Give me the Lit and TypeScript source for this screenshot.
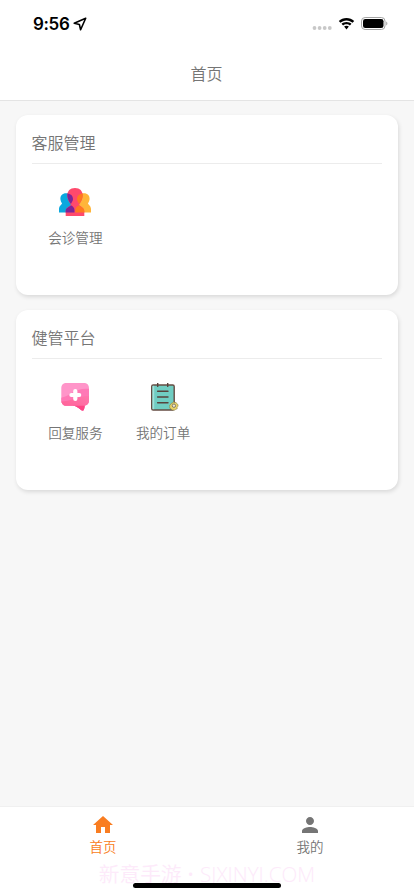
import { LitElement, html, css, svg } from "lit";
import { customElement, property } from "lit/decorators.js";

const peopleIcon = svg`<svg viewBox="0 0 32 32" width="32" height="32">
  <path fill="#ffb53a" d="M24.800 5.300c4 0 6 2.600 5.800 5.800-.1 2-1 3.200-1.600 4.300 0 1.200 3 2 3 5.600v3.400H16.500V8c3-.2 4-2.700 8.300-2.700z"/>
  <path fill="#0ba8de" d="M7.200 5.300c-4 0-6 2.600-5.800 5.800.1 2 1 3.200 1.600 4.300 0 1.200-3 2-3 5.600v3.400h15.500V8c-3-.2-4-2.700-8.300-2.700z"/>
  <path fill="#ff496c" d="M16 0C11 0 8.300 3 8.300 7.600c0 3.700 1.700 6.500 3.500 9 0 1.800-5.100 2.700-5.100 6.800V28h18.600v-4.600c0-4.100-5.100-5-5.100-6.800 1.800-2.500 3.500-5.300 3.500-9C23.700 3 21 0 16 0z"/>
  <path fill="#7f2497" d="M8.400 5.400c3.800.2 6.100 3.200 5.500 6.600-.3 1.700-1.500 2.400-1.900 3.900-2-2.500-4.200-6.300-3.600-10.500zM12 17.200c2.400 1.400 3.500 2.600 3.500 5.300v1.900H6.700v-1.500c0-3.500 4.300-4.100 5.300-5.700z"/>
  <path fill="#ff781f" d="M23.600 5.400c-3.800.2-6.100 3.200-5.500 6.600.3 1.700 1.500 2.400 1.900 3.900 2-2.500 4.200-6.300 3.600-10.500zM20 17.200c-2.600 1.400-3.700 2.600-3.700 5.300v1.900h9v-1.500c0-3.500-4.300-4.100-5.300-5.700z"/>
</svg>`;

const chatIcon = svg`<svg viewBox="0 0 32 32" width="32" height="32">
  <defs>
    <linearGradient id="lo" x1="0" y1="1" x2="1" y2="0"><stop offset="0" stop-color="#ff5b92"/><stop offset="1" stop-color="#ff78ac"/></linearGradient>
    <clipPath id="bubble"><path d="M7.800 0h16.700C28.200 0 30 1.800 30 5.500V17c0 3-1.200 5-4.300 5.600-.2 1.300-.3 2.500-.7 3.700-.4 1.300-1.300 1.500-2.500.9-2.300-1.300-4-3.400-7-4.400H7.800c-3.700 0-5.500-2-5.500-5.800V5.500C2.300 1.800 4.100 0 7.800 0z"/></clipPath>
  </defs>
  <g clip-path="url(#bubble)">
    <path fill="#ff95c9" d="M0 0h32v30H0z"/>
    <path fill="#ff79b6" d="M0 15C10 15 15 4 31 6v24H0z"/>
    <path fill="url(#lo)" d="M0 18.500c10 1 17-5.500 31-5.500v17H0z"/>
    <path fill="#ff4485" d="M14 22.800h12.400V30H14z"/>
  </g>
  <path fill="#fff" d="M14.200 8q0-2 2.100-2t2.100 2v1.900h1.900q2 0 2 2.100t-2 2.100h-1.900V16q0 2-2.100 2t-2.100-2v-1.900h-1.900q-2 0-2-2.100t2-2.100h1.900z"/>
</svg>`;

const orderIcon = svg`<svg viewBox="0 0 32 32" width="32" height="32">
  <rect x="4.700" y="2" width="22.500" height="25" rx="1.500" fill="#70cdc2" stroke="#654c43" stroke-width="1.400"/>
  <path d="M5.500 2.800h1.700v23.400H5.500z" fill="#a2e0d8"/>
  <path d="M10.700 0v3.400M20.700 0v3.400M10.600 8.300H21M10.600 14H21M10.600 19.700H21" fill="none" stroke="#57433c" stroke-width="1.400" stroke-linecap="round"/>
  <path d="m26 18.700 1.500 1 1.800-.1.800 1.600 1.500 1-.1 1.800-1 1.500.1 1.700-1.700.7-1 .9-1.900-.2-1.700.2-.9-1.500-1.600-.8.100-1.800-.3-1.700 1.500-1 .8-1.600 1.500-.1z" transform="translate(4.200 3.200) scale(.85 .83)" fill="#e9d468" stroke="#8b803d" stroke-width=".7"/>
  <circle cx="26.900" cy="22.700" r="1.700" fill="#eee8ce" stroke="#777161" stroke-width=".9"/>
</svg>`;

const homeIcon = svg`<svg viewBox="0 0 24 24" width="24" height="24"><path fill="currentColor" d="M10 20v-6h4v6h5v-8h3L12 3 2 12h3v8z"/></svg>`;
const personIcon = svg`<svg viewBox="0 0 24 24" width="24" height="24"><path fill="currentColor" d="M12 12c2.210 0 4-1.790 4-4s-1.790-4-4-4-4 1.790-4 4 1.790 4 4 4zm0 2c-2.670 0-8 1.340-8 4v2h16v-2c0-2.660-5.330-4-8-4z"/></svg>`;

@customElement("status-bar")
class StatusBar extends LitElement {
  static styles = css`
    :host { display: flex; justify-content: space-between; height: 48px; box-sizing: border-box; padding: 0 26px 0 33px; align-items: center; color: #000; }
    .left, .right { display: flex; align-items: center; }
    .left { gap: 4px; }
    .time { font: 600 17px/20px Inter, "Liberation Sans", sans-serif; letter-spacing: -0.35px; }
    .right { gap: 6px; margin-top: -1px; }
    .dots { margin-top: 9px; }
    svg { display: block; }
  `;
  render() {
    return html`
      <div class="left">
        <span class="time">9:56</span>
        <svg width="14" height="14" viewBox="0 0 14 14"><path d="M12.700 1.200 1.200 6.300l5.200 1.200 1.200 5.200z" fill="none" stroke="#000" stroke-width="1.600" stroke-linejoin="round"/></svg>
      </div>
      <div class="right">
        <svg class="dots" width="20" height="4" viewBox="0 0 20 4" fill="#c8c8c8"><circle cx="2.500" cy="2" r="1.900"/><circle cx="7.600" cy="2" r="1.900"/><circle cx="12.700" cy="2" r="1.900"/><circle cx="17.800" cy="2" r="1.900"/></svg>
        <svg width="17" height="12" viewBox="0 0 17 12"><path d="M8.500 2.400c2.400 0 4.500.9 6.100 2.400l1.600-1.700C14.200 1.200 11.500.1 8.500.1S2.800 1.200.8 3.100l1.600 1.700C4 3.300 6.100 2.400 8.500 2.400zm0 3.800c1.300 0 2.500.5 3.400 1.300l1.600-1.700c-1.300-1.200-3.100-1.900-5-1.900s-3.700.7-5 1.900l1.600 1.700c.9-.8 2.100-1.300 3.400-1.300zm2.400 2.400c-.6-.6-1.500-.9-2.400-.9s-1.800.3-2.400.9l2.400 2.800z"/></svg>
        <svg width="27" height="13" viewBox="0 0 27 13"><rect x=".5" y=".5" width="23.500" height="12" rx="3.600" fill="none" stroke="#a3a3a3"/><rect x="2" y="2" width="20.500" height="9" rx="2.300"/><path d="M25.300 4.500c1.400.5 1.400 3.500 0 4z" fill="#999"/></svg>
      </div>`;
  }
}

@customElement("menu-card")
class MenuCard extends LitElement {
  @property() heading = "";
  @property({ attribute: false }) items: { label: string; icon: unknown }[] = [];
  static styles = css`
    :host { display: block; box-sizing: border-box; height: 179.500px; padding: 0 16px; border-radius: 12px; background: #fff; box-shadow: 1px 2px 4px rgba(0, 0, 0, 0.12); }
    .heading { height: 49px; box-sizing: border-box; padding-top: 15px; border-bottom: 1px solid #ececec; font-size: 16px; line-height: 24px; }
    .grid { display: grid; grid-template-columns: repeat(4, 87.750px); }
    .item { display: flex; flex-direction: column; align-items: center; padding-top: 24px; }
    .item svg { display: block; }
    .label { margin-top: 7px; font-size: 13.600px; line-height: 20px; white-space: nowrap; }
  `;
  render() {
    return html`
      <div class="heading">${this.heading}</div>
      <div class="grid">
        ${this.items.map((i) => html`<div class="item">${i.icon}<span class="label">${i.label}</span></div>`)}
      </div>`;
  }
}

@customElement("app-root")
class AppRoot extends LitElement {
  static styles = css`
    :host { display: flex; flex-direction: column; width: 414px; height: 896px; overflow: hidden; background: #f7f7f7; color: #757575; font-family: "Noto Sans CJK SC", sans-serif; font-weight: 350; }
    .header { height: 101px; flex: none; box-sizing: border-box; background: #fff; border-bottom: 1px solid #e4e4e4; }
    .title { text-align: center; font-size: 16px; line-height: 24px; padding-top: 13px; padding-right: 1px; }
    .content { flex: 1; display: flex; flex-direction: column; gap: 15.500px; padding: 14px 16px 14px 15.500px; }
    .tabs { position: relative; height: 90px; flex: none; box-sizing: border-box; display: flex; background: #fff; border-top: 1px solid #f0f0f0; }
    .tab { flex: 1; display: flex; flex-direction: column; align-items: center; padding-top: 6px; padding-right: 1px; font-size: 13.500px; line-height: 18px; }
    .tab svg { display: block; }
    .active { color: #f97d21; }
    .mark { position: absolute; left: 0; right: 0; bottom: 8px; text-align: center; font: 350 20.700px/28px "Open Sans", "Noto Sans CJK SC", sans-serif; color: #fdeafa; white-space: nowrap; }
    .pill { position: absolute; left: 133px; bottom: 8px; width: 148px; height: 5px; border-radius: 3px; background: #000; }
  `;
  render() {
    return html`
      <header class="header">
        <status-bar></status-bar>
        <div class="title">首页</div>
      </header>
      <main class="content">
        <menu-card heading="客服管理" .items=${[{ label: "会诊管理", icon: peopleIcon }]}></menu-card>
        <menu-card heading="健管平台" .items=${[{ label: "回复服务", icon: chatIcon }, { label: "我的订单", icon: orderIcon }]}></menu-card>
      </main>
      <nav class="tabs">
        <div class="tab active">${homeIcon}<span>首页</span></div>
        <div class="tab">${personIcon}<span>我的</span></div>
        <div class="mark">新意手游 • SJXINYI.COM</div>
        <div class="pill"></div>
      </nav>`;
  }
}
